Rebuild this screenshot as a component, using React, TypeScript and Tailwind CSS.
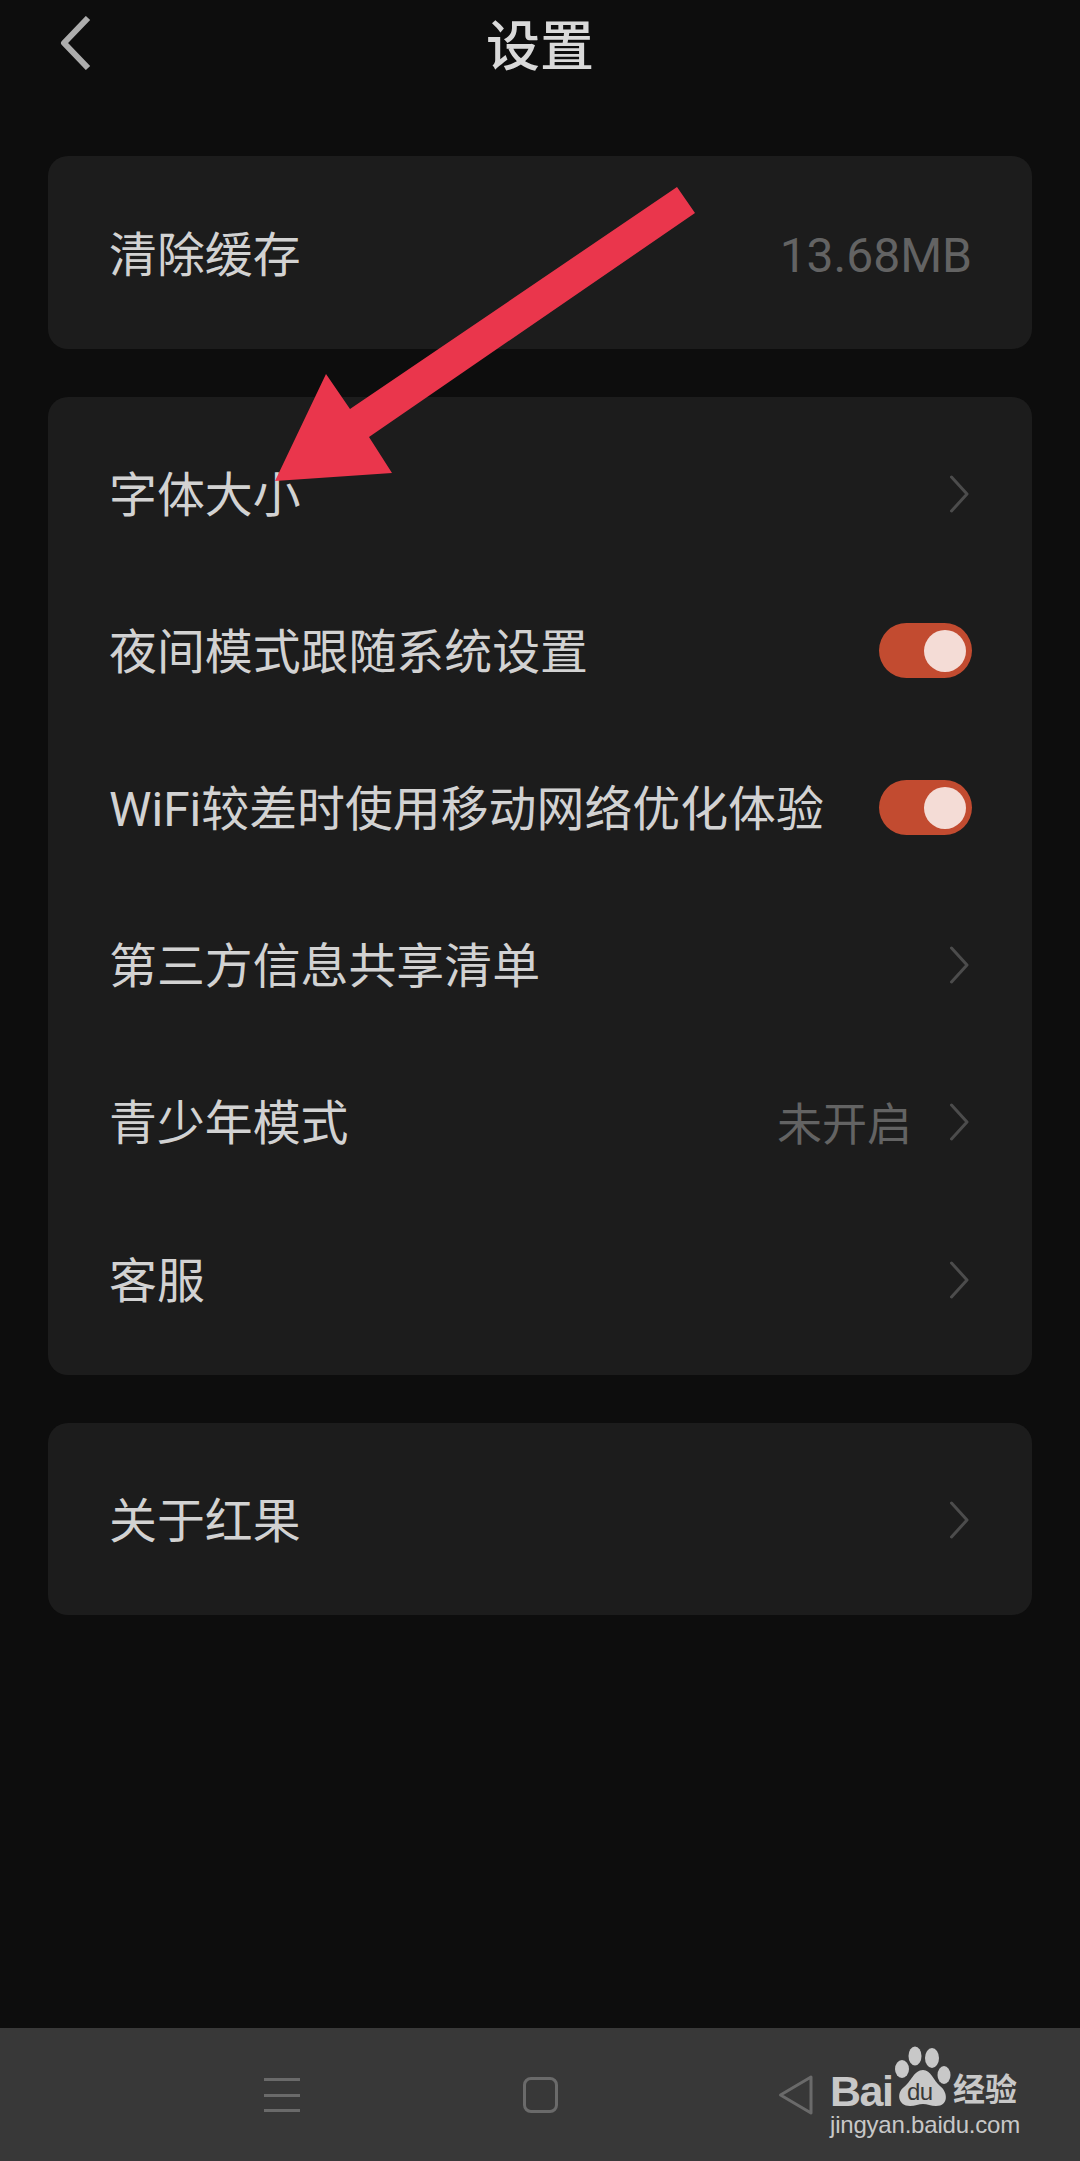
const font = "font-['Roboto','Noto_Sans_CJK_SC',sans-serif]";

const Chevron = () => (
  <svg width="22" height="38" viewBox="0 0 22 38" fill="none" className="shrink-0">
    <path d="M1.5 2 L17 19 L1.5 36" stroke="#4c4c4c" strokeWidth="3" strokeLinecap="round" strokeLinejoin="round" />
  </svg>
);

const Toggle = () => (
  <div className="flex h-[55px] w-[93px] items-center justify-end rounded-full bg-[#c24b30] pr-[6px]">
    <div className="h-[42px] w-[42px] rounded-full bg-[#f4dcd6]" />
  </div>
);

const Row = ({ label, value, valueClass, right }: { label: string; value?: string; valueClass?: string; right?: React.ReactNode }) => (
  <div className="flex h-[157.2px] items-center justify-between pl-[61px] pr-[60px]">
    <span className="pt-[6px] text-[47.9px] leading-none text-[#d2d2d2]">{label}</span>
    <div className="flex items-center gap-[38px]">
      {value && <span className={`leading-none text-[#636363] ${valueClass ?? "pt-[3px] text-[48px]"}`}>{value}</span>}
      {right}
    </div>
  </div>
);

const Arrow = () => (
  <svg className="absolute left-0 top-0" width="1080" height="600" viewBox="0 0 1080 600">
    <polygon points="677,187 695,213 369,437 392,473 275,481 326,374 350,409" fill="#ea364c" />
  </svg>
);

const BaiduLogo = () => (
  <div className="absolute left-[830px] top-[2040px] h-[100px] w-[200px]">
    <span className="absolute left-0 top-[33px] font-['Liberation_Sans',sans-serif] text-[43px] font-bold leading-[36px] tracking-[-1.5px] text-[#c8c8c8]">
      Bai
    </span>
    <svg className="absolute left-[65px] top-[6px]" width="56" height="64" viewBox="0 0 56 64" fill="#c8c8c8">
      <ellipse cx="20" cy="10" rx="6.5" ry="9.5" />
      <ellipse cx="37" cy="12" rx="7" ry="10" />
      <ellipse cx="7" cy="23" rx="7" ry="9" />
      <ellipse cx="49" cy="29" rx="6.5" ry="9" />
      <path d="M28 24 C36 24 38 34 45 40 C53 46 54 60 41 60 C36 60 32 58 28 58 C24 58 20 60 15 60 C3 60 1 47 9 41 C16 36 19 24 28 24 Z" />
    </svg>
    <span className="absolute left-[77px] top-[40px] font-['Liberation_Sans',sans-serif] text-[24px] leading-[24px] tracking-[-0.5px] text-[#383838]">
      du
    </span>
    <span className="absolute left-[123px] top-[32px] text-[32px] font-bold leading-[36px] text-[#c8c8c8]">经验</span>
    <span className="absolute left-0 top-[73px] whitespace-nowrap font-['Liberation_Sans',sans-serif] text-[24px] leading-[24px] tracking-[-0.2px] text-[#c8c8c8]">
      jingyan.baidu.com
    </span>
  </div>
);

export default function App() {
  return (
    <div className={`relative flex h-[2161px] w-[1080px] flex-col overflow-hidden bg-[#0d0d0d] ${font}`}>
      <header className="relative flex h-[156px] shrink-0 justify-center pt-[18px]">
        <svg className="absolute left-[60px] top-[16px]" width="32" height="54" viewBox="0 0 32 54" fill="none">
          <path d="M28 2 L4 27 L28 52" stroke="#adadad" strokeWidth="6" strokeLinejoin="round" />
        </svg>
        <h1 className="text-[54px] font-medium leading-[60px] text-[#d9d9d9]">设置</h1>
      </header>

      <div className="flex flex-col gap-[48px] px-[48px]">
        <section className="flex h-[193px] flex-col justify-center rounded-[20px] bg-[#1c1c1c] pt-[3px]">
          <Row label="清除缓存" value="13.68MB" />
        </section>

        <section className="rounded-[20px] bg-[#1c1c1c] pb-[17px] pt-[18px]">
          <Row label="字体大小" right={<Chevron />} />
          <Row label="夜间模式跟随系统设置" right={<Toggle />} />
          <Row label="WiFi较差时使用移动网络优化体验" right={<Toggle />} />
          <Row label="第三方信息共享清单" right={<Chevron />} />
          <Row label="青少年模式" value="未开启" valueClass="pt-[6px] text-[45px]" right={<Chevron />} />
          <Row label="客服" right={<Chevron />} />
        </section>

        <section className="flex h-[192px] flex-col justify-center rounded-[20px] bg-[#1c1c1c] pt-[2px]">
          <Row label="关于红果" right={<Chevron />} />
        </section>
      </div>

      <nav className="absolute bottom-0 left-0 flex h-[133px] w-full bg-[#383838]">
        <div className="ml-[264px] mt-[49px] flex h-[36px] w-[36px] flex-col justify-between py-[1px]">
          <div className="h-[3px] bg-[#6a6a6a]" />
          <div className="h-[3px] bg-[#6a6a6a]" />
          <div className="h-[3px] bg-[#6a6a6a]" />
        </div>
        <div className="ml-[223px] mt-[49px] h-[36px] w-[35px] rounded-[8px] border-[3px] border-[#6a6a6a]" />
        <svg className="ml-[220px] mt-[46px]" width="36" height="42" viewBox="0 0 36 42" fill="none">
          <path d="M33 3 L2.5 21 L33 39 Z" stroke="#6a6a6a" strokeWidth="3" strokeLinejoin="round" />
        </svg>
      </nav>

      <Arrow />
      <BaiduLogo />
    </div>
  );
}
